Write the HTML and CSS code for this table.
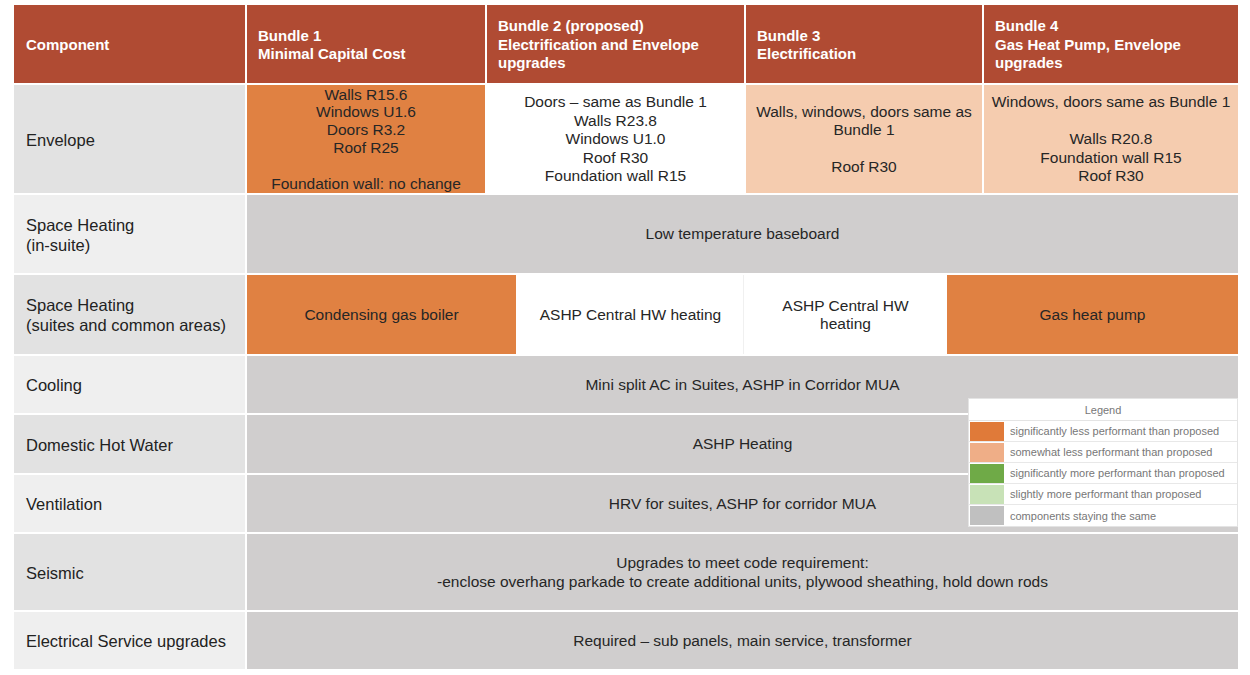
FILE: index.html
```html
<!DOCTYPE html>
<html>
<head>
<meta charset="utf-8">
<link rel="stylesheet" href="styles.css">
</head>
<body>
<div class="page">
  <div class="table">
    <div class="hd">Component</div>
    <div class="hd">Bundle 1<br>Minimal Capital Cost</div>
    <div class="hd">Bundle 2 (proposed)<br>Electrification and Envelope<br>upgrades</div>
    <div class="hd">Bundle 3<br>Electrification</div>
    <div class="hd">Bundle 4<br>Gas Heat Pump, Envelope<br>upgrades</div>

    <div class="lbl dark">Envelope</div>
    <div class="cell orange tight">Walls R15.6<br>Windows U1.6<br>Doors R3.2<br>Roof R25<br><br>Foundation wall: no change</div>
    <div class="cell white">Doors – same as Bundle 1<br>Walls R23.8<br>Windows U1.0<br>Roof R30<br>Foundation wall R15</div>
    <div class="cell peach">Walls, windows, doors same as<br>Bundle 1<br><br>Roof R30</div>
    <div class="cell peach">Windows, doors same as Bundle 1<br><br>Walls R20.8<br>Foundation wall R15<br>Roof R30</div>

    <div class="lbl light">Space Heating<br>(in-suite)</div>
    <div class="cell gray span">Low temperature baseboard</div>

    <div class="lbl dark">Space Heating<br>(suites and common areas)</div>
    <div class="span split">
      <div class="cell orange w1">Condensing gas boiler</div>
      <div class="cell white w2">ASHP Central HW heating</div>
      <div class="cell white w3">ASHP Central HW<br>heating</div>
      <div class="cell orange w4">Gas heat pump</div>
    </div>

    <div class="lbl light">Cooling</div>
    <div class="cell gray span">Mini split AC in Suites, ASHP in Corridor MUA</div>

    <div class="lbl dark">Domestic Hot Water</div>
    <div class="cell gray span">ASHP Heating</div>

    <div class="lbl light">Ventilation</div>
    <div class="cell gray span">HRV for suites, ASHP for corridor MUA</div>

    <div class="lbl dark">Seismic</div>
    <div class="cell gray span">Upgrades to meet code requirement:<br>-enclose overhang parkade to create additional units, plywood sheathing, hold down rods</div>

    <div class="lbl light">Electrical Service upgrades</div>
    <div class="cell gray span">Required – sub panels, main service, transformer</div>
  </div>

  <div class="legend">
    <div class="legend-title">Legend</div>
    <div class="legend-row"><span class="sw sw-orange"></span><span class="lt">significantly less performant than proposed</span></div>
    <div class="legend-row"><span class="sw sw-peach"></span><span class="lt">somewhat less performant than proposed</span></div>
    <div class="legend-row"><span class="sw sw-green"></span><span class="lt">significantly more performant than proposed</span></div>
    <div class="legend-row"><span class="sw sw-lgreen"></span><span class="lt">slightly more performant than proposed</span></div>
    <div class="legend-row"><span class="sw sw-gray"></span><span class="lt">components staying the same</span></div>
  </div>
</div>
</body>
</html>
```

FILE: styles.css
```css
* { box-sizing: border-box; }
html, body { margin: 0; padding: 0; background: #fff; }
body {
  font-family: "Liberation Sans", Arial, sans-serif;
  color: #262626;
  width: 1250px;
  height: 675px;
  overflow: hidden;
}
.page {
  position: relative;
  padding: 5px 0 0 14px;
}
.table {
  display: grid;
  grid-template-columns: 231px 238px 257px 236px 254px;
  grid-template-rows: 78px 108px 78px 79px 57px 58px 57px 76px 57px;
  gap: 2px;
}
.hd {
  background: #B04B33;
  color: #fff;
  font-weight: bold;
  font-size: 15px;
  line-height: 18.5px;
  display: flex;
  align-items: center;
  padding: 2px 0 0 11px;
}
.hd:first-child { padding-left: 12px; }
.lbl {
  font-size: 16.5px;
  line-height: 20px;
  display: flex;
  align-items: center;
  padding: 1px 0 0 12px;
  color: #222;
}
.lbl.dark { background: #E2E2E2; }
.lbl.light { background: #EFEFEF; }
.cell {
  font-size: 15.5px;
  line-height: 18.5px;
  display: flex;
  align-items: center;
  justify-content: center;
  text-align: center;
  overflow: hidden;
  padding-top: 1px;
}
.cell.tight { line-height: 17.8px; padding-top: 0; }
.orange { background: #E08142; }
.peach { background: #F5CCAF; }
.white { background: #fff; }
.gray { background: #D0CECE; }
.span { grid-column: 2 / 6; }
.split {
  display: flex;
  gap: 2px;
}
.split .cell { height: 100%; }
.w1 { width: 269px; }
.w2 { width: 226px; border-right: 1px solid #f0f0f0; }
.w3 { width: 199px; }
.w4 { width: 291px; }

.legend {
  position: absolute;
  left: 968px;
  top: 398px;
  width: 270px;
  background: #fff;
  border: 1px solid #e4e4e4;
  font-size: 11px;
  color: #777;
}
.legend-title {
  height: 22px;
  line-height: 22px;
  text-align: center;
  border-bottom: 1px solid #e4e4e4;
}
.legend-row {
  display: flex;
  align-items: center;
  height: 21px;
  border-bottom: 1px solid #e8e8e8;
}
.legend-row:last-child { border-bottom: none; }
.sw {
  width: 34px;
  height: 19px;
  margin: 0 6px 0 1px;
  flex: none;
}
.sw-orange { background: #E07A39; }
.sw-peach { background: #EFAE87; }
.sw-green { background: #6FAA47; }
.sw-lgreen { background: #C8E2B7; }
.sw-gray { background: #C0C0C0; }
.lt { white-space: nowrap; }
```
